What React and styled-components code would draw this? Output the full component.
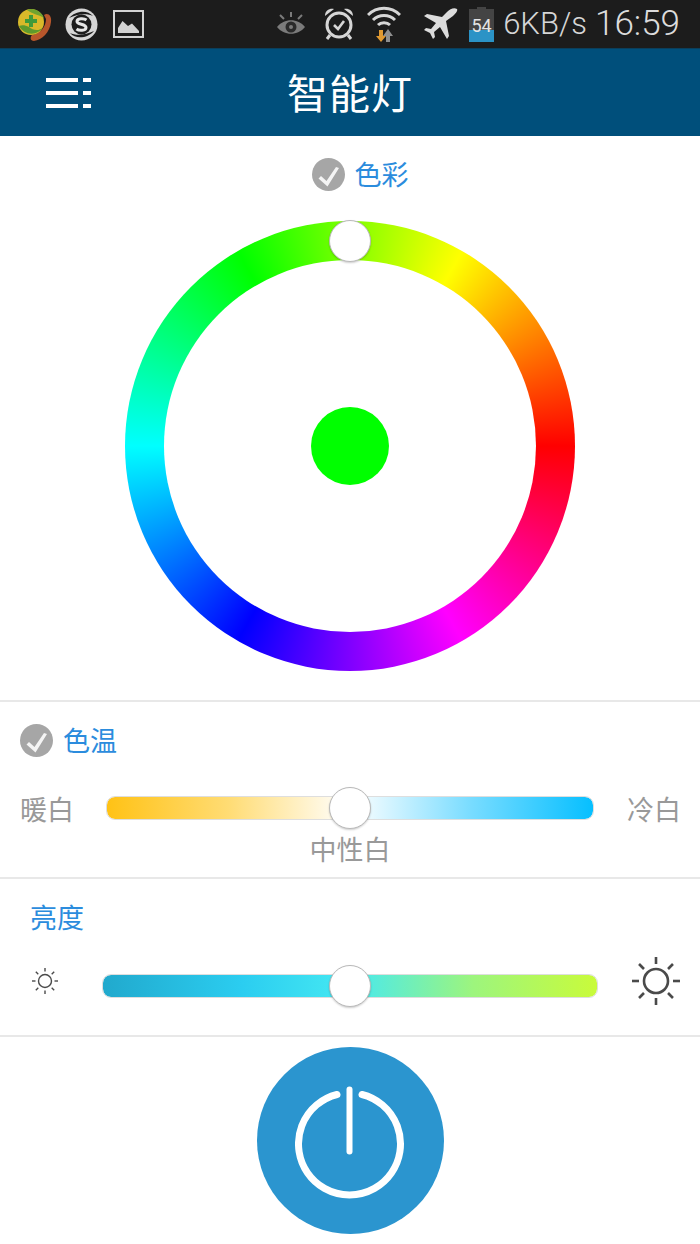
import React from "react";
import styled, { createGlobalStyle } from "styled-components";

const Global = createGlobalStyle`
  html, body { margin: 0; padding: 0; background: #fff; }
  body { font-family: "Noto Sans CJK SC", "Liberation Sans", sans-serif; }
  * { box-sizing: border-box; }
`;
const Page = styled.div`width: 700px; height: 1244px; background: #fff; overflow: hidden; display: flex; flex-direction: column;`;

const StatusBar = styled.div`height: 48px; background: #1c1c1c; display: flex; align-items: center; padding: 0 20px 0 18px; flex: none;`;
const Slot = styled.span`display: flex; flex: none; margin-left: ${p => p.$ml || 0}px;`;
const Speed = styled.span`font-family: Roboto, "Liberation Sans", sans-serif; font-weight: 300; font-size: 31px; line-height: 48px; color: #d6d6d6; margin-left: 9px; white-space: nowrap;`;
const Clock = styled.span`font-family: Roboto, "Liberation Sans", sans-serif; font-weight: 300; font-size: 35px; line-height: 48px; color: #dcdcdc; margin-left: 8px; white-space: nowrap;`;
const Spacer = styled.div`flex: 1;`;

const Header = styled.header`height: 88px; background: #004f7b; border-top: 1px solid #0b3f5c; flex: none; display: flex; align-items: center; justify-content: center; position: relative;`;
const MenuButton = styled.span`position: absolute; left: 46px; top: 27px; display: flex;`;
const Title = styled.h1`margin: 0; font-size: 41px; font-weight: 400; line-height: 88px; color: #fff; letter-spacing: 1px; position: relative; top: -2px;`;

const ColorSection = styled.section`height: 566px; border-bottom: 2px solid #e8e8e8; flex: none; padding-top: 20px; display: flex; flex-direction: column; align-items: center;`;
const LabelRow = styled.div`display: flex; align-items: center; gap: 10px; height: 36px; padding-left: ${p => p.$pl || 0}px;`;
const Label = styled.span`font-size: 27px; line-height: 36px; color: #2b8cdd;`;
const CheckMark = styled.span`width: 33px; height: 33px; flex: none; display: flex;`;

const Wheel = styled.div`width: 450px; height: 450px; margin-top: 29px; flex: none; border-radius: 50%; position: relative; display: flex; align-items: center; justify-content: center;
  background: conic-gradient(from 90deg, #ff0000 0deg, #ff00ff 60deg, #0000ff 120deg, #00ffff 180deg, #00ff00 240deg, #ffff00 300deg, #ff0000 360deg);`;
const WheelHole = styled.div`width: 372px; height: 372px; border-radius: 50%; background: #fff; display: flex; align-items: center; justify-content: center;`;
const Preview = styled.div`width: 78px; height: 78px; border-radius: 50%; background: #00ff00;`;
const Knob = styled.div`width: 42px; height: 42px; border-radius: 50%; background: #fff; border: 1.5px solid #b9b9b9; box-shadow: 0 1px 2px rgba(0,0,0,.2); position: absolute; left: 50%; top: 50%; transform: translate(-50%, -50%);`;
const WheelKnob = styled(Knob)`top: 20px;`;

const TempSection = styled.section`height: 177px; border-bottom: 2px solid #e8e8e8; flex: none; padding: 20px 20px 0; display: flex; flex-direction: column;`;
const SliderRow = styled.div`display: flex; align-items: center; margin-top: ${p => p.$mt}px;`;
const EndText = styled.span`font-size: 27px; line-height: 36px; color: #999; flex: none; width: 53px; white-space: nowrap; position: relative; top: 1px;`;
const Track = styled.div`height: 24px; border-radius: 9px; position: relative; flex: none; width: ${p => p.$w}px; margin: 0 ${p => p.$mx}px; border: 1px solid #dedede; background: ${p => p.$bg}; background-clip: padding-box;`;
const Neutral = styled.div`text-align: center; font-size: 27px; line-height: 36px; color: #999; margin-top: 5px;`;

const BrightSection = styled.section`height: 158px; border-bottom: 2px solid #e8e8e8; flex: none; padding: 20px 0 0; display: flex; flex-direction: column;`;
const BrightLabel = styled(Label)`margin-left: 30px;`;
const BrightRow = styled.div`display: flex; align-items: center; height: 50px; margin-top: 26px;`;
const SunSmall = styled.span`display: flex; margin-left: 31px; width: 28px; position: relative; top: -5px;`;
const SunLarge = styled.span`display: flex; margin-left: 33px; width: 50px; position: relative; top: -5px;`;
const BrightTrack = styled(Track)`margin: 0 0 0 43px;`;

const PowerArea = styled.div`flex: 1; display: flex; justify-content: center; padding-top: 10px;`;
const PowerButton = styled.button`width: 187px; height: 187px; border: 0; padding: 0; border-radius: 50%; background: #2b95cf; display: flex; align-items: center; justify-content: center;`;

const Check = () => (
  <CheckMark>
    <svg width="33" height="33" viewBox="0 0 33 33">
      <circle cx="16.5" cy="16.5" r="16.5" fill="#a6a6a6" />
      <path d="M6.5 20.5 L9 18 L14.5 23 L24 9 L27 10 L15.5 28.5Z" fill="#f4f4f4" />
    </svg>
  </CheckMark>
);

const Sun = ({ size, r, inner, outer, sw }) => {
  const c = size / 2;
  const rays = [0, 45, 90, 135, 180, 225, 270, 315];
  return (
    <svg width={size} height={size} viewBox={`0 0 ${size} ${size}`}>
      <circle cx={c} cy={c} r={r} fill="none" stroke="#4a4a4a" strokeWidth={sw} />
      {rays.map(a => {
        const t = (a * Math.PI) / 180;
        return <line key={a} x1={c + inner * Math.cos(t)} y1={c + inner * Math.sin(t)} x2={c + outer * Math.cos(t)} y2={c + outer * Math.sin(t)} stroke="#4a4a4a" strokeWidth={sw} />;
      })}
    </svg>
  );
};

export default function App() {
  return (
    <Page>
      <Global />
      <StatusBar>
        <Slot>
          <svg width="34" height="34" viewBox="0 0 34 34">
            <path d="M26 8 C30 5 34 9 33 15 C32 25 24 33 16 34 C12 34 12 30 14 28 C22 27 28 20 28 12Z" fill="#b8562b" />
            <circle cx="13" cy="15" r="13" fill="#d9b92a" />
            <path d="M1 19 C6 28 19 30 25 20 C21 25 15 23 11 20 C7 18 4 18 1 19Z" fill="#5f9a2c" />
            <path d="M9 3 C16 0 24 5 26 11 C22 8 14 7 9 3Z" fill="#6fa32f" />
            <path d="M11 8 h4 v4 h4 v4 h-4 v4 h-4 v-4 h-4 v-4 h4z" fill="#3f9a3a" />
          </svg>
        </Slot>
        <Slot $ml={13}>
          <svg width="33" height="33" viewBox="0 0 33 33">
            <circle cx="16.5" cy="16.5" r="16" fill="#d6d6d6" />
            <path d="M4 10 C10 3 22 1 28 8 C22 5 12 6 4 10Z M29 23 C23 30 11 32 5 25 C11 28 21 27 29 23Z" fill="#1c1c1c" />
            <circle cx="16.5" cy="16.5" r="10" fill="#1c1c1c" />
            <path d="M21.5 12 C19 10 12 10 12 13.5 C12 17 21 15.5 21 19.5 C21 23 14 23 11.5 21" fill="none" stroke="#e6e6e6" strokeWidth="3" />
          </svg>
        </Slot>
        <Slot $ml={15}>
          <svg width="31" height="28" viewBox="0 0 31 28">
            <rect x="1" y="1" width="29" height="26" fill="#1c1c1c" stroke="#d2d2d2" strokeWidth="2" />
            <path d="M5 23 V18 L9.5 11 L15 16 L19 13.5 L26 21 V23Z" fill="#d2d2d2" />
          </svg>
        </Slot>
        <Spacer />
        <Slot>
          <svg width="30" height="26" viewBox="0 0 30 26">
            <path d="M1 16 C8 7 22 7 29 16 C22 25 8 25 1 16Z" fill="#7b7b7b" />
            <circle cx="15" cy="16" r="5.5" fill="#2a2a2a" />
            <circle cx="15" cy="16" r="2" fill="#7b7b7b" />
            <path d="M15 1 V6 M4 4 L8 8 M26 4 L22 8" stroke="#7b7b7b" strokeWidth="2" />
          </svg>
        </Slot>
        <Slot $ml={17}>
          <svg width="32" height="34" viewBox="0 0 32 34">
            <circle cx="16" cy="18" r="12" fill="none" stroke="#d6d6d6" strokeWidth="3" />
            <path d="M2 9 C2 3 7 1 11 2Z M30 9 C30 3 25 1 21 2Z" fill="#d6d6d6" />
            <path d="M7 28 L4 32 M25 28 L28 32" stroke="#d6d6d6" strokeWidth="3" />
            <path d="M11 18 L15 22 L21 14" fill="none" stroke="#d6d6d6" strokeWidth="2.6" />
          </svg>
        </Slot>
        <Slot $ml={12}>
          <svg width="34" height="36" viewBox="0 0 34 36">
            <path d="M1 9 C10 0 24 0 33 9 M6 14 C12 8 22 8 28 14 M11 19 C14 16 20 16 23 19" fill="none" stroke="#d6d6d6" strokeWidth="3" />
            <path d="M12 24 h4 v6 h3 l-5 6 l-5 -6 h3z" fill="#e09a32" />
            <path d="M23 36 h-4 v-6 h-3 l5 -7 l5 7 h-3z" fill="#8f8f8f" />
          </svg>
        </Slot>
        <Slot $ml={22}>
          <svg width="35" height="32" viewBox="0 0 35 32">
            <path d="M34 1 C31 -1 27 1 24 4 L19 9 L4 6 L1 8 L13 15 L8 21 L3 20 L1 22 L7 25 L10 31 L12 29 L11 24 L17 19 L24 31 L26 28 L23 13 L30 8 C33 5 35 3 34 1Z" fill="#dcdcdc" />
          </svg>
        </Slot>
        <Slot $ml={11}>
          <svg width="25" height="35" viewBox="0 0 25 35">
            <rect x="8" y="0" width="9" height="3" fill="#444" />
            <rect x="0" y="2" width="25" height="21" fill="#444" />
            <rect x="0" y="23" width="25" height="12" fill="#2b93c6" />
            <text x="12.5" y="25" textAnchor="middle" fontFamily="Roboto, sans-serif" fontSize="18" fill="#e4e4e4">54</text>
          </svg>
        </Slot>
        <Speed>6KB/s</Speed>
        <Clock>16:59</Clock>
      </StatusBar>

      <Header>
        <MenuButton>
          <svg width="46" height="34" viewBox="0 0 46 34" fill="#fff">
            <rect x="0" y="2" width="32" height="4" />
            <rect x="0" y="15" width="32" height="4" />
            <rect x="0" y="28" width="32" height="4" />
            <rect x="37" y="2" width="8" height="4" />
            <rect x="37" y="15" width="8" height="4" />
            <rect x="37" y="28" width="8" height="4" />
          </svg>
        </MenuButton>
        <Title>智能灯</Title>
      </Header>

      <ColorSection>
        <LabelRow $pl={20}>
          <Check />
          <Label>色彩</Label>
        </LabelRow>
        <Wheel>
          <WheelHole><Preview /></WheelHole>
          <WheelKnob />
        </Wheel>
      </ColorSection>

      <TempSection>
        <LabelRow>
          <Check />
          <Label>色温</Label>
        </LabelRow>
        <SliderRow $mt={32}>
          <EndText>暖白</EndText>
          <Track $w={488} $mx={33} $bg="linear-gradient(90deg, #ffc215 0%, #ffdc74 25%, #ffffff 50%, #ffffff 50%, #78dcff 75%, #06bfff 100%)">
            <Knob />
          </Track>
          <EndText>冷白</EndText>
        </SliderRow>
        <Neutral>中性白</Neutral>
      </TempSection>

      <BrightSection>
        <BrightLabel>亮度</BrightLabel>
        <BrightRow>
          <SunSmall><Sun size={28} r={6.5} inner={9.5} outer={13} sw={1.4} /></SunSmall>
          <BrightTrack $w={496} $bg="linear-gradient(90deg, #21a9cd 0%, #2bcdf0 28%, #46e9f2 50%, #9df57d 75%, #c9fb3a 100%)">
            <Knob />
          </BrightTrack>
          <SunLarge><Sun size={50} r={12} inner={17} outer={24} sw={2.6} /></SunLarge>
        </BrightRow>
      </BrightSection>

      <PowerArea>
        <PowerButton aria-label="power">
          <svg width="110" height="116" viewBox="0 0 110 116">
            <path d="M42 11.5 A51 51 0 1 0 67 11.5" fill="none" stroke="#fff" strokeWidth="7" strokeLinecap="round" />
            <line x1="54.5" y1="6.5" x2="54.5" y2="68.5" stroke="#fff" strokeWidth="6" strokeLinecap="round" />
          </svg>
        </PowerButton>
      </PowerArea>
    </Page>
  );
}
